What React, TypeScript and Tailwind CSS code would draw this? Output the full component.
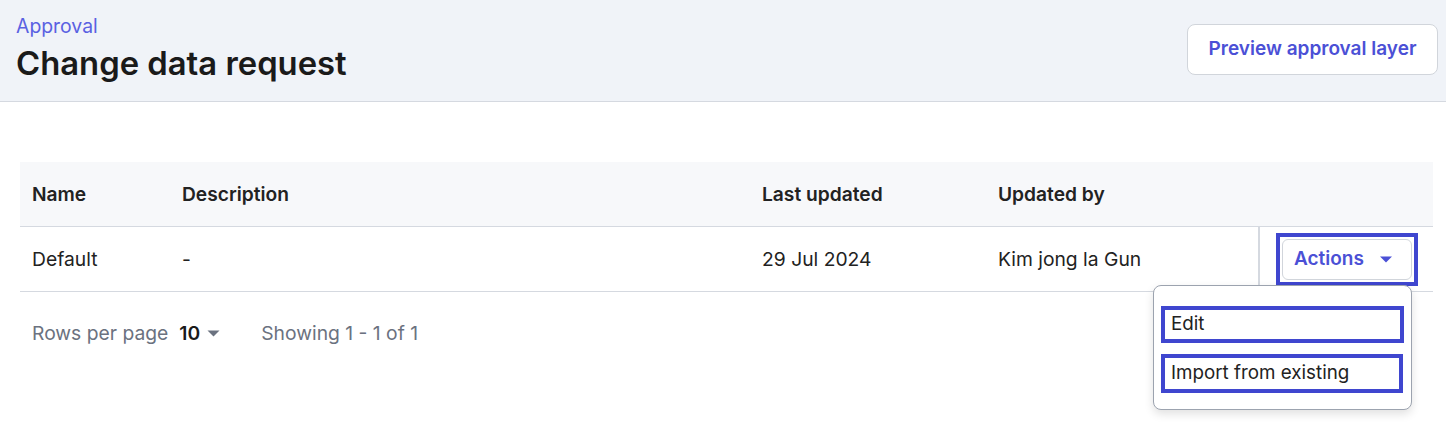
function Caret({ className }: { className: string }) {
  return (
    <svg className={className} viewBox="0 0 12 7" fill="currentColor">
      <path d="M0 0.5h12L6 6.5z" />
    </svg>
  );
}

function PageHeader() {
  return (
    <div className="flex items-start justify-between bg-[#f0f3f8] border-b border-[#d5d9e0] h-[102px] pl-[16px] pr-[8px]">
      <div className="flex flex-col pt-[14px]">
        <p className="text-[19.4px] leading-[24px] text-[#5a61e2]">Approval</p>
        <h1 className="mt-[5px] text-[32.8px] leading-[40px] font-semibold text-[#1a1a1a]">Change data request</h1>
      </div>
      <button className="mt-[24px] h-[51px] w-[251px] rounded-lg border border-[#d1d5db] bg-white text-[19px] font-semibold text-[#4b50d6]">
        Preview approval layer
      </button>
    </div>
  );
}

const cols = "grid grid-cols-[150px_580px_236px_272px_1fr]";

function Table() {
  return (
    <div className="mx-[20px] mt-[60px] w-[1413px]">
      <div className={`${cols} h-[65px] items-center bg-[#f7f8fa] border-b border-[#d5d9e0] text-[19.2px] font-semibold text-[#222]`}>
        <div className="pl-[12px]">Name</div>
        <div className="pl-[12px]">Description</div>
        <div className="pl-[12px]">Last updated</div>
        <div className="pl-[12px]">Updated by</div>
        <div />
      </div>
      <div className={`${cols} h-[65px] items-center border-b border-[#d5d9e0] text-[19.3px] text-[#222]`}>
        <div className="pl-[12px]">Default</div>
        <div className="pl-[12px]">-</div>
        <div className="pl-[12px]">29 Jul 2024</div>
        <div className="pl-[12px]">Kim jong la Gun</div>
        <div className="flex h-full items-center border-l-2 border-[#d5d9e0] pl-[16px]">
          <div className="border-4 border-[#3f46cf] p-[2px]">
            <button className="flex h-[41px] w-[130px] items-center gap-[16px] rounded-md border border-[#d1d5db] bg-white pl-[11px] text-[19px] font-semibold text-[#4b50d6]">
              Actions
              <Caret className="h-[7px] w-[12px]" />
            </button>
          </div>
        </div>
      </div>
      <div className="flex items-center h-[82px] pl-[12px] text-[19.3px] text-[#6b7280]">
        <span>Rows per page</span>
        <span className="ml-[11px] font-semibold text-[#1a1a1a]">10</span>
        <Caret className="ml-[7px] h-[7px] w-[13px] text-[#6b7280]" />
        <span className="ml-[41px]">Showing 1 - 1 of 1</span>
      </div>
    </div>
  );
}

function Menu() {
  return (
    <div className="absolute left-[1153px] top-[285px] w-[259px] rounded-lg border border-[#9ca3af] bg-white px-[7px] pt-[20px] pb-[16px] shadow-[0_4px_10px_rgba(0,0,0,0.12)] text-[18.8px] text-[#222]">
      <div className="flex h-[37px] items-center border-4 border-[#3f46cf] pl-[6px]">Edit</div>
      <div className="mt-[11px] flex h-[39px] items-center border-4 border-[#3f46cf] pl-[6px] mr-[1px]">Import from existing</div>
    </div>
  );
}

export default function App() {
  return (
    <div className="relative h-[425px] w-[1446px] bg-white font-['Inter',sans-serif] overflow-hidden">
      <PageHeader />
      <Table />
      <Menu />
    </div>
  );
}
